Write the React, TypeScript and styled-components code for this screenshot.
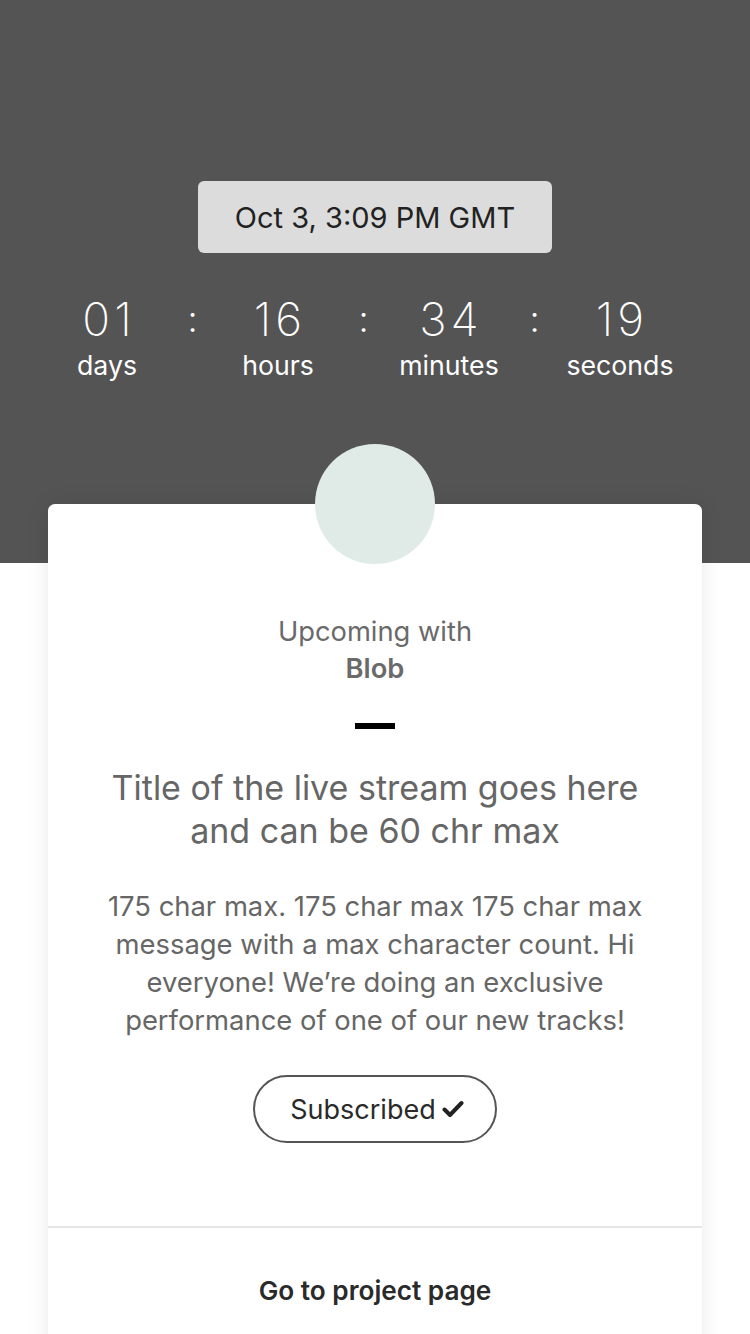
import React from "react";
import styled, { createGlobalStyle } from "styled-components";

const Global = createGlobalStyle`
  html, body { margin: 0; padding: 0; background: #ffffff; }
  body { font-family: Inter, "Noto Sans", "Liberation Sans", sans-serif; -webkit-font-smoothing: antialiased; }
  * { box-sizing: border-box; }
`;

const Page = styled.div`
  width: 750px;
  min-height: 1334px;
  overflow: hidden;
  background: #ffffff;
`;

const Header = styled.header`
  height: 563px;
  background: #545454;
  display: flex;
  flex-direction: column;
  align-items: center;
  padding-top: 181px;
`;

const DatePill = styled.div`
  width: 354px;
  height: 72px;
  border-radius: 6px;
  background: #dcdcdc;
  color: #222222;
  font-size: 29px;
  display: flex;
  align-items: center;
  justify-content: center;
`;

const Countdown = styled.div`
  align-self: stretch;
  display: grid;
  grid-template-columns: 140px 31px 140px 31px 140px 31px 140px;
  padding-left: 37px;
  margin-top: 38px;
  color: #ffffff;
`;

const Unit = styled.div`
  display: flex;
  flex-direction: column;
  align-items: center;
`;

const Number = styled.div`
  font-size: 46px;
  font-weight: 200;
  line-height: 56px;
  letter-spacing: 4px;
  padding-left: 4px;
`;

const Label = styled.div`
  font-size: 26.7px;
  line-height: 34px;
  margin-top: 1px;
`;

const Colon = styled.div`
  font-size: 36px;
  font-weight: 300;
  line-height: 56px;
  text-align: center;
`;

const Card = styled.section`
  position: relative;
  margin: -59px 48px 0;
  background: #ffffff;
  border-radius: 7px 7px 0 0;
  box-shadow: 0 0 22px rgba(0, 0, 0, 0.09);
  display: flex;
  flex-direction: column;
  align-items: center;
  min-height: 890px;
`;

const Avatar = styled.div`
  width: 120px;
  height: 120px;
  border-radius: 50%;
  background: #e0ebe7;
  margin-top: -60px;
`;

const Upcoming = styled.div`
  margin-top: 49px;
  font-size: 27.3px;
  line-height: 37px;
  color: #6a6a6a;
  text-align: center;
`;

const Artist = styled.div`
  font-weight: 600;
`;

const Dash = styled.div`
  width: 40px;
  height: 6px;
  background: #000000;
  margin-top: 36px;
`;

const Title = styled.h1`
  margin: 37px 0 0;
  font-size: 34px;
  font-weight: 400;
  line-height: 43px;
  color: #666666;
  text-align: center;
  width: 560px;
`;

const Message = styled.p`
  margin: 35px 0 0;
  font-size: 27.4px;
  line-height: 38px;
  color: #666666;
  text-align: center;
  width: 580px;
`;

const SubscribeButton = styled.button`
  margin-top: 36px;
  width: 244px;
  height: 68px;
  border: 2px solid #555555;
  border-radius: 34px;
  background: #ffffff;
  color: #2a2a2a;
  font-family: inherit;
  font-size: 27px;
  display: flex;
  align-items: center;
  justify-content: center;
  gap: 6px;
  padding: 0 0 0 4px;
`;

const Divider = styled.div`
  align-self: stretch;
  height: 2px;
  background: #e6e6e6;
  margin-top: 83px;
`;

const Footer = styled.div`
  align-self: stretch;
  height: 124px;
  display: flex;
  align-items: center;
  justify-content: center;
  font-size: 26.2px;
  font-weight: 600;
  color: #2a2a2a;
`;

const Check = () => (
  <svg width="22" height="18" viewBox="0 0 22 18" aria-hidden="true">
    <path d="M2.5 9.5 L8 15 L19.5 3" fill="none" stroke="#222" strokeWidth="4" strokeLinecap="round" strokeLinejoin="round" />
  </svg>
);

const units = [
  { value: "01", label: "days" },
  { value: "16", label: "hours" },
  { value: "34", label: "minutes" },
  { value: "19", label: "seconds" },
];

export default function App() {
  return (
    <Page>
      <Global />
      <Header>
        <DatePill>Oct 3, 3:09 PM GMT</DatePill>
        <Countdown>
          {units.map((u, i) => (
            <React.Fragment key={u.label}>
              {i > 0 && <Colon>:</Colon>}
              <Unit>
                <Number>{u.value}</Number>
                <Label>{u.label}</Label>
              </Unit>
            </React.Fragment>
          ))}
        </Countdown>
      </Header>
      <Card>
        <Avatar />
        <Upcoming>
          Upcoming with
          <Artist>Blob</Artist>
        </Upcoming>
        <Dash />
        <Title>Title of the live stream goes here and can be 60 chr max</Title>
        <Message>
          175 char max. 175 char max 175 char max message with a max character count. Hi everyone! We’re doing an exclusive performance of one of our new tracks!
        </Message>
        <SubscribeButton>
          Subscribed<Check />
        </SubscribeButton>
        <Divider />
        <Footer>Go to project page</Footer>
      </Card>
    </Page>
  );
}
